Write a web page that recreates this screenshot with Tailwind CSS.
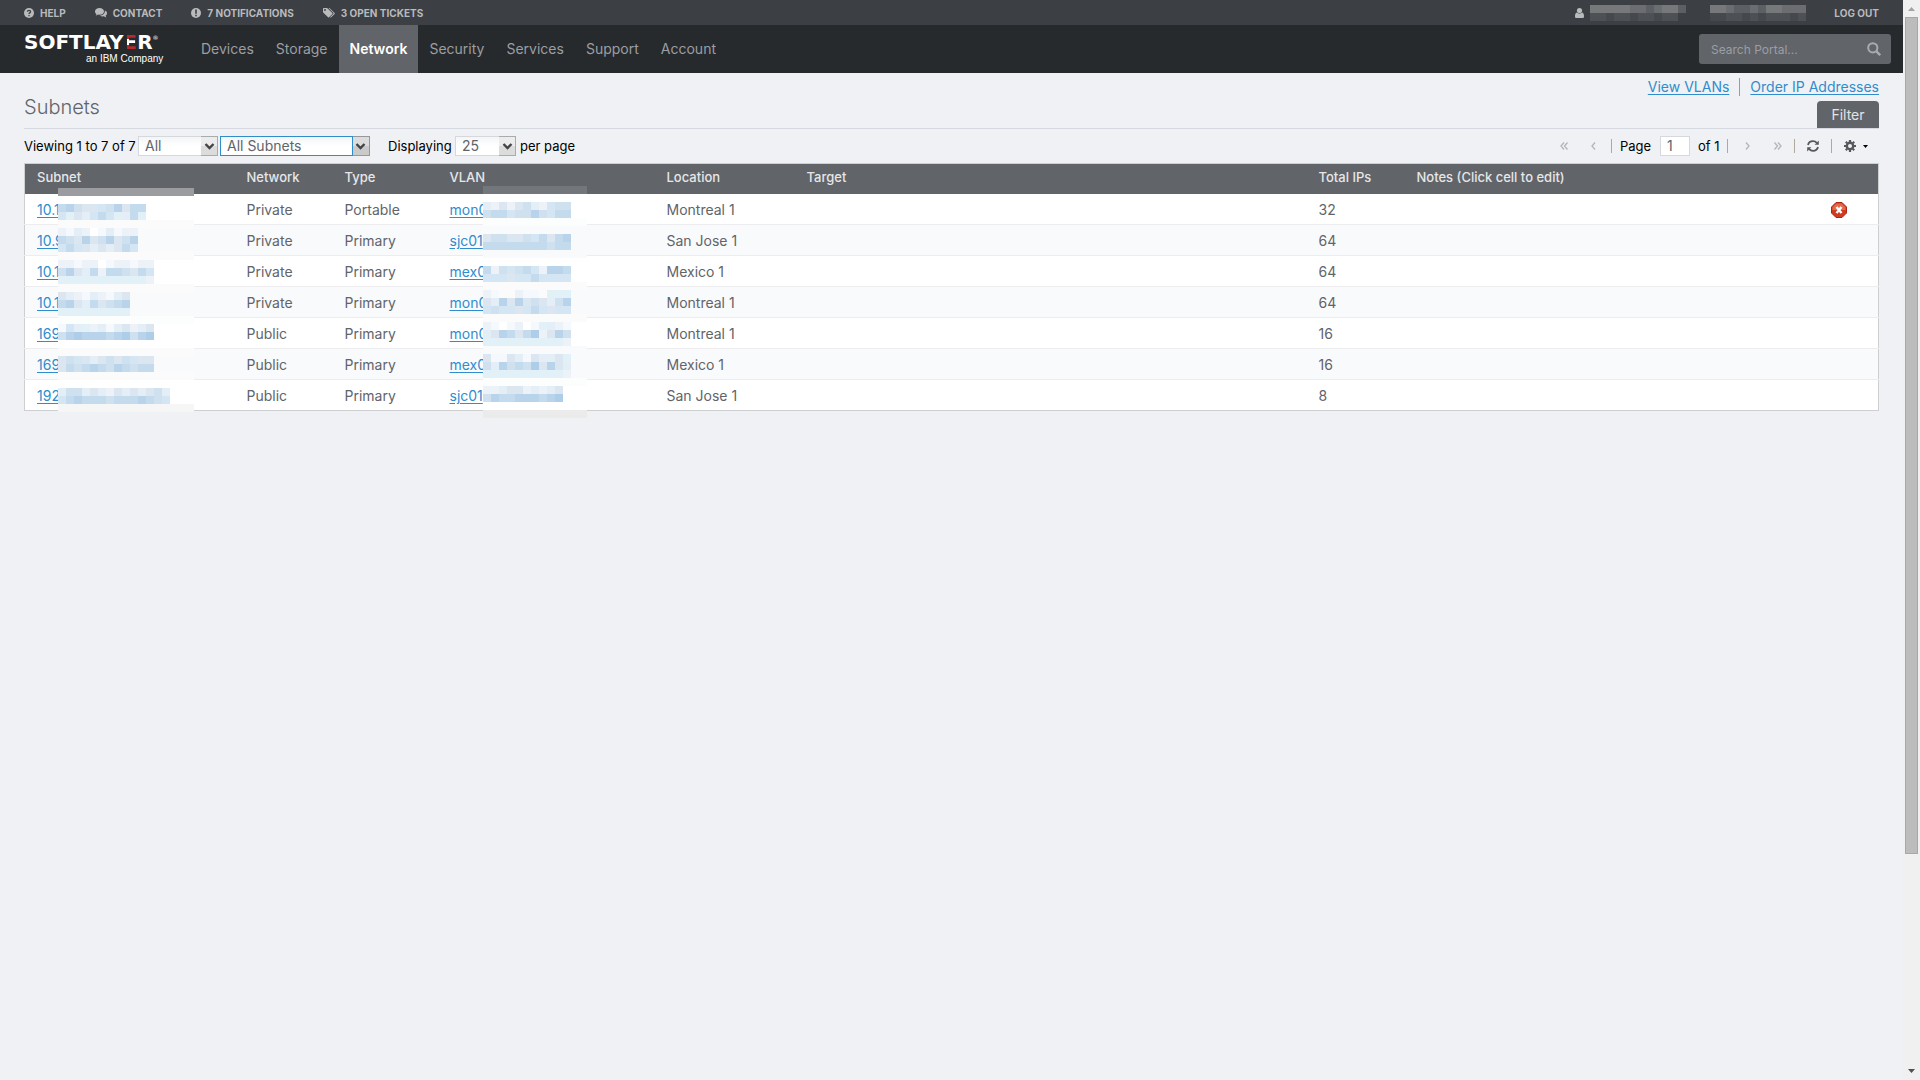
<!DOCTYPE html>
<html lang="en">
<head>
  <meta charset="UTF-8" />
  <meta name="viewport" content="width=device-width, initial-scale=1.0" />
  <title>Subnets</title>
  <script src="https://cdn.jsdelivr.net/npm/@tailwindcss/browser@4"></script>
</head>
<body class="flex min-h-screen bg-[#eff1f4] font-['Inter','Liberation_Sans',sans-serif] text-sm text-[#616469]">
  <div class="flex-1 min-w-0">
    <!-- Utility bar -->
    <div class="flex h-[25px] items-center justify-between bg-[#3c3f44] px-6 pt-px text-[10px] font-bold text-[#b9babc]">
      <div class="flex items-center gap-[29px]">
        <a href="#" class="flex items-center gap-1.5">
          <svg class="size-[10px]" viewBox="0 0 10 10"><circle cx="5" cy="5" r="5" fill="#b9babc"/><path d="M3.4 3.8C3.5 2 6.6 2 6.6 3.8 6.6 4.9 5 4.8 5 6.1M5 7v1.2" fill="none" stroke="#3c3f44" stroke-width="1.3"/></svg>
          HELP
        </a>
        <a href="#" class="flex items-center gap-1.5">
          <svg class="h-[10px] w-3" viewBox="0 0 12 10" fill="#b9babc"><path d="M4.5 0C7 0 9 1.4 9 3.4S7 6.7 4.500 6.700c-.5 0-1 0-1.400-.2C2.300 7.200 1.300 7.600.5 7.600c.5-.5.9-1.100.9-1.700C.5 5.300 0 4.400 0 3.400 0 1.400 2 0 4.500 0z"/><path d="M9.900 2.500C11.200 3 12 4 12 5.200c0 1-.6 1.900-1.400 2.400 0 .7.4 1.300.9 1.800-1 0-1.900-.5-2.600-1.100-1.500.3-3 0-4.200-.8 3 0 5.300-1.800 5.200-5z"/></svg>
          CONTACT
        </a>
        <a href="#" class="flex items-center gap-1.5">
          <svg class="size-[10px]" viewBox="0 0 10 10"><circle cx="5" cy="5" r="5" fill="#b9babc"/><path d="M5 1.600v4.200M5 6.800v1.500" stroke="#3c3f44" stroke-width="1.600"/></svg>
          7 NOTIFICATIONS
        </a>
        <a href="#" class="flex items-center gap-1.5">
          <svg class="h-[10px] w-3" viewBox="0 0 12 10" fill="#b9babc"><path fill-rule="evenodd" d="M0 .6Q0 0 .6 0h3.200q.5 0 .9.400l4.600 4.500q.5.500 0 1L6.100 9.200q-.5.500-1 0L.4 4.700Q0 4.300 0 3.800zM2 1.100a.9.9 0 1 0 0 1.800.9.9 0 0 0 0-1.800z"/><path d="M5.500 0h.9l5.200 5q.5.500 0 1L8.200 9.300q-.6.500-1.200 0l3.200-3.200q.7-.7 0-1.400z"/></svg>
          3 OPEN TICKETS
        </a>
      </div>
      <div class="flex items-center">
        <svg class="mr-1.5 h-[10px] w-[9px]" viewBox="0 0 9 10" fill="#b9babc"><circle cx="4.500" cy="2.600" r="2.600"/><path d="M1.800 4.600C.4 5 0 6.700 0 8.400 0 9.400.6 10 1.500 10h6C8.400 10 9 9.400 9 8.400c0-1.700-.4-3.400-1.800-3.800-1.500 1.400-3.900 1.400-5.400 0z"/></svg>
        <svg id="user-mask" class="h-4 w-[216px]"></svg>
        <a href="#" class="ml-[28px]">LOG OUT</a>
      </div>
    </div>

    <!-- Main navigation -->
    <header class="flex h-12 items-center justify-between bg-[#272a2d] pr-3 pl-6">
      <div class="flex h-full items-center">
        <a href="#" class="flex w-[152px] flex-col pb-1 text-white">
          <span class="flex font-['DejaVu_Sans',sans-serif] text-[20px] leading-6 font-bold">SOFTLAY<span class="bg-[linear-gradient(#b5292f_9px,#fff_9px,#fff_15px,#b5292f_15px)] bg-[position:3px_0] bg-no-repeat bg-clip-text text-transparent">E</span>R<span class="text-[6px] leading-4 font-normal">®</span></span>
          <span class="pl-[62px] font-['Liberation_Sans',sans-serif] text-[10px] leading-[10px]">an IBM Company</span>
        </a>
        <nav class="flex h-full pl-[14px] text-[#9b9ea2]">
          <a href="#" class="flex items-center px-[11px]">Devices</a>
          <a href="#" class="flex items-center px-[11px]">Storage</a>
          <a href="#" class="flex items-center bg-[#616469] px-[11px] font-semibold text-white">Network</a>
          <a href="#" class="flex items-center px-[11px]">Security</a>
          <a href="#" class="flex items-center px-[11px]">Services</a>
          <a href="#" class="flex items-center px-[11px]">Support</a>
          <a href="#" class="flex items-center px-[11px]">Account</a>
        </nav>
      </div>
      <form class="flex h-[30px] w-48 items-center rounded-[3px] bg-[#616469] pr-[10px] pl-3">
        <input type="text" aria-label="Search Portal" placeholder="Search Portal..." class="min-w-0 flex-1 pt-px text-xs text-white outline-none placeholder:text-[#9b9ea2]" />
        <button type="button" aria-label="Search"><svg class="size-[14px]" viewBox="0 0 14 14" fill="none" stroke="#a9abae" stroke-width="2"><circle cx="5.800" cy="5.800" r="4.600"/><path d="M9.200 9.200l4 4" stroke-width="2.400"/></svg></button>
      </form>
    </header>

    <main class="px-6">
      <!-- Title and page actions -->
      <div class="flex h-14 justify-between border-b border-[#d5d8de]">
        <h1 class="pt-5 text-[20px] leading-7 font-light">Subnets</h1>
        <div class="flex flex-col items-end justify-between">
          <div class="flex pt-[5px] leading-[18px] text-[#2f8dcd]">
            <a href="#" class="underline underline-offset-2">View VLANs</a>
            <span class="mx-[10px] w-px bg-[#999ca1]"></span>
            <a href="#" class="underline underline-offset-2">Order IP Addresses</a>
          </div>
          <button type="button" class="h-[27px] w-[62px] rounded-t bg-[#616469] text-[#e3e4e5]">Filter</button>
        </div>
      </div>

      <!-- Toolbar -->
      <div class="flex h-[34px] items-center justify-between text-[13px] text-black">
        <div class="flex items-center">
          <span class="w-[114px] whitespace-nowrap">Viewing 1 to 7 of 7</span>
          <div class="relative mr-0.5 h-5 w-20">
            <select aria-label="Network" class="size-full appearance-none border border-[#d5d8dc] bg-linear-to-b from-[#f3f5f6] to-white to-50% pl-1.5 text-sm leading-4 text-[#616469]"><option>All</option></select>
            <svg class="pointer-events-none absolute top-0 right-0 h-5 w-[17px]" viewBox="0 0 17 20"><path d="M0 0h17v20H0z" fill="#a9abad"/><path d="M0 1h16v9H0z" fill="#ececec"/><path d="M0 10h16v9H0z" fill="#dcdcdc"/><path d="M4.500 8l4 4 4-4" fill="none" stroke="#444" stroke-width="2.400"/></svg>
          </div>
          <div class="relative h-5 w-[150px]">
            <select aria-label="Subnet type" class="size-full appearance-none border border-[#2f8dcd] bg-linear-to-b from-[#f3f5f6] to-white to-50% pl-1.5 text-sm leading-4 text-[#616469]"><option>All Subnets</option></select>
            <svg class="pointer-events-none absolute top-0 right-0 h-5 w-[18px]" viewBox="0 0 18 20"><path d="M0 0h18v20H0z" fill="#96989a"/><path d="M0 0h1v20H0z" fill="#2f8dcd"/><path d="M1 1h16v9H1z" fill="#dcdcdc"/><path d="M1 10h16v9H1z" fill="#cacaca"/><path d="M4.500 8l4 4 4-4" fill="none" stroke="#444" stroke-width="2.400"/></svg>
          </div>
          <label for="page-size" class="w-[85px] pl-[18px]">Displaying</label>
          <div class="relative h-5 w-[61px]">
            <select id="page-size" class="size-full appearance-none border border-[#d5d8dc] bg-linear-to-b from-[#f3f5f6] to-white to-50% pl-1.5 text-sm leading-4 text-[#616469]"><option>25</option></select>
            <svg class="pointer-events-none absolute top-0 right-0 h-5 w-[17px]" viewBox="0 0 17 20"><path d="M0 0h17v20H0z" fill="#a9abad"/><path d="M0 1h16v9H0z" fill="#ececec"/><path d="M0 10h16v9H0z" fill="#dcdcdc"/><path d="M4.500 8l4 4 4-4" fill="none" stroke="#444" stroke-width="2.400"/></svg>
          </div>
          <span class="pl-1">per page</span>
        </div>
        <div class="flex items-center">
          <button type="button" aria-label="First page" class="w-[30px]"><svg class="h-2 w-2" viewBox="0 0 8 8" fill="none" stroke="#b3b5b8" stroke-width="1.300"><path d="M4 .5L1 4l3 3.500M7.500.5l-3 3.500 3 3.500"/></svg></button>
          <button type="button" aria-label="Previous page" class="w-[21px]"><svg class="h-2 w-2" viewBox="0 0 8 8" fill="none" stroke="#b3b5b8" stroke-width="1.300"><path d="M5 .5L2 4l3 3.500"/></svg></button>
          <span class="h-[14px] w-px bg-[#b0a898]"></span>
          <label for="page" class="w-12 pl-2">Page</label>
          <input id="page" type="text" value="1" class="h-5 w-[30px] border border-[#d5d8dc] bg-white pl-1.5 text-sm text-[#616469]" />
          <span class="w-[37px] pl-2 whitespace-nowrap">of 1</span>
          <span class="h-[14px] w-px bg-[#b0a898]"></span>
          <button type="button" aria-label="Next page" class="w-[46px] pl-4"><svg class="h-2 w-2" viewBox="0 0 8 8" fill="none" stroke="#b3b5b8" stroke-width="1.300"><path d="M2 .5L5 4 2 7.500"/></svg></button>
          <button type="button" aria-label="Last page" class="w-5"><svg class="h-2 w-2" viewBox="0 0 8 8" fill="none" stroke="#b3b5b8" stroke-width="1.300"><path d="M.5.500l3 3.500-3 3.500M4 .5L7 4 4 7.500"/></svg></button>
          <span class="h-[14px] w-px bg-[#b0a898]"></span>
          <button type="button" aria-label="Refresh" class="flex w-9 justify-center"><svg class="size-3" viewBox="0 0 12 12" fill="none" stroke="#55585c" stroke-width="1.800"><path d="M1 5C1.600 2.500 3.600 1.200 6 1.200c1.500 0 2.800.6 3.800 1.700M11 7c-.6 2.500-2.600 3.800-5 3.800-1.500 0-2.800-.6-3.800-1.700"/><path d="M11.800.6v4.200H7.600zM.2 11.400V7.200h4.200z" fill="#55585c" stroke="none"/></svg></button>
          <span class="h-[14px] w-px bg-[#b0a898]"></span>
          <button type="button" aria-label="Settings" class="flex w-[47px] items-center gap-[7px] pl-3">
            <svg class="size-3" viewBox="0 0 12 12" fill="none" stroke="#55585c"><circle cx="6" cy="6" r="3.200" stroke-width="2.400"/><path d="M6 0v2M6 10v2M0 6h2M10 6h2M1.800 1.800l1.400 1.400M8.800 8.800l1.400 1.400M1.800 10.200l1.400-1.400M8.800 3.200l1.400-1.400" stroke-width="2.200"/></svg>
            <svg class="h-[3px] w-[5px]" viewBox="0 0 5 3"><path d="M0 0h5L2.500 3z"/></svg>
          </button>
        </div>
      </div>

      <!-- Subnet list -->
      <div class="relative">
        <table class="w-full table-fixed border-collapse border border-[#cdcfd1] bg-white text-left">
          <colgroup>
            <col class="w-[210px]" /><col class="w-[98px]" /><col class="w-[105px]" /><col class="w-[217px]" /><col class="w-[140px]" /><col /><col class="w-[98px]" /><col class="w-[396px]" /><col class="w-[78px]" />
          </colgroup>
          <thead>
            <tr class="h-[30px] bg-[#616469] text-[13px] text-[#e6e7e8] *:px-3 *:pt-0 *:pb-[3px] *:font-medium">
              <th>Subnet</th><th>Network</th><th>Type</th><th>VLAN</th><th>Location</th><th>Target</th><th>Total IPs</th><th>Notes (Click cell to edit)</th><th></th>
            </tr>
          </thead>
          <tbody id="subnets"></tbody>
        </table>
        <svg id="subnet-mask" class="pointer-events-none absolute top-[25px] left-[34px] h-[224px] w-[136px]"></svg>
        <svg id="vlan-mask" class="pointer-events-none absolute top-[23px] left-[459px] h-[232px] w-[104px]"></svg>
      </div>
    </main>
  </div>

  <!-- Scrollbar -->
  <div class="flex w-[17px] shrink-0 flex-col items-center bg-[#f0f0f0]">
    <svg class="h-[17px] w-[17px] shrink-0" viewBox="0 0 17 17"><path d="M5 11h7L8.500 7z" fill="#a3a3a3"/></svg>
    <div class="flex w-full flex-1 justify-center"><div class="h-4/5 w-[13px] border border-[#a8a8a8] bg-[#bcbcbc]"></div></div>
    <svg class="h-[17px] w-[17px] shrink-0" viewBox="0 0 17 17"><path d="M5 6h7l-3.500 4z" fill="#505050"/></svg>
  </div>

  <script>
    const subnets = [
      ['10.1', 'Private', 'Portable', 'mon0', 'Montreal 1', 32],
      ['10.9', 'Private', 'Primary', 'sjc01', 'San Jose 1', 64],
      ['10.1', 'Private', 'Primary', 'mex0', 'Mexico 1', 64],
      ['10.1', 'Private', 'Primary', 'mon0', 'Montreal 1', 64],
      ['169', 'Public', 'Primary', 'mon0', 'Montreal 1', 16],
      ['169', 'Public', 'Primary', 'mex0', 'Mexico 1', 16],
      ['192', 'Public', 'Primary', 'sjc01', 'San Jose 1', 8],
    ];

    const cancelButton = `
      <button type="button" aria-label="Cancel subnet" class="block mx-auto">
        <svg class="size-4" viewBox="0 0 16 16"><path d="M5 .5h6L15.500 5v6L11 15.500H5L.5 11V5z" fill="#d03a1e" stroke="#b32215"/><path d="M5.300 1.500h5.400l3.800 3.800V8h-13V5.300z" fill="#e2694a"/><path d="M5.500 5l5 6M10.500 5l-5 6" stroke="#fff" stroke-width="2.400"/></svg>
      </button>`;

    document.getElementById('subnets').innerHTML = subnets.map(([subnet, network, type, vlan, location, total], i) => `
      <tr class="h-[31px] border-b border-[#ededef] last:border-[#cdcfd1] even:bg-[#f9fafc] *:px-3 *:pt-0.5 *:pb-0">
        <td><a href="#" class="text-[#2f8dcd] underline underline-offset-2">${subnet}</a></td>
        <td>${network}</td>
        <td>${type}</td>
        <td><a href="#" class="text-[#2f8dcd] underline underline-offset-2">${vlan}</a></td>
        <td>${location}</td>
        <td></td>
        <td>${total}</td>
        <td></td>
        <td>${i === 0 ? cancelButton : ''}</td>
      </tr>`).join('');

    // Private values are covered by blocks of 8px squares, one letter per square
    const shades = {
      '.': '#ffffff', '-': '#fbfbfb', '_': '#f9fafc', '=': '#fcfefe', '+': '#f6f6f6', '~': '#ebebec',
      a: '#f5f8fc', b: '#edf2f9', c: '#e3eef6', d: '#dbe6f1', e: '#cfe1ef', f: '#c4daed', g: '#b8d3ea', h: '#aecde8',
      s: '#d4e6f3', t: '#e2f0f7', y: '#9b9ca0', z: '#73767b',
      K: '#6b6d71', L: '#77787a', M: '#5c5f63', N: '#4d5054', P: '#45484c',
    };

    function drawMask(id, rows) {
      document.getElementById(id).innerHTML = rows.map((row, y) => [...row].map((c, x) =>
        shades[c] ? `<rect x="${x * 8}" y="${y * 8}" width="8" height="8" fill="${shades[c]}" shape-rendering="crispEdges"/>` : ''
      ).join('')).join('');
    }

    drawMask('subnet-mask', [
      'yyyyyyyyyyyyyyyyy',
      '.................',
      'fgeddsegdff......',
      'stdcsfstcft......',
      '-----------------',
      'bacb.acabb_______',
      'fedgdegdeg_______',
      'sfsdcdcdfs_______',
      '-----------------',
      'bbabb.abbabb.....',
      'egdcfbffedfs.....',
      'tttttttttttb.....',
      '-----------------',
      'dcbacbacd________',
      'fgdcfdefg________',
      'ttttttttt________',
      '=================',
      'asctbcacdbcd.....',
      'eghgggfghegh.....',
      '.................',
      '-----------------',
      'desdcdedesdd_____',
      'dfefgfegfeff_____',
      '-----------------',
      '.................',
      'ceecdcbdcdcdec...',
      'sfgfffefffgfes...',
      '+++++++++++++++++',
    ]);

    drawMask('vlan-mask', [
      'zzzzzzzzzzzzz',
      '.............',
      'cbdbdecbsee..',
      'effseegesff..',
      '=============',
      '_____________',
      'deeddesfdfg__',
      'ffffffffeff__',
      '_____________',
      '.............',
      'fbesefsbggf..',
      'sssdssfssss..',
      '-------------',
      'ba--baa-ttt__',
      'dcgdgdedceg__',
      'sessdsfsdss__',
      '-------------',
      'ba.ab.atcba..',
      'cdgfdfhbdge..',
      'ttttttttttb..',
      '_____________',
      'daadcadccdt__',
      'ecgefehdgdc__',
      'ttttttttttb__',
      '=============',
      'bbcddbcbcd...',
      'egffgggfgh...',
      '.............',
      '~~~~~~~~~~~~~',
    ]);

    drawMask('user-mask', [
      'LLLLLKKMKLLM  QLLKMMKMLLKKK',
      'NNPNNPNNPNN    PPNNPNPNNNPN',
    ]);
  </script>
</body>
</html>
